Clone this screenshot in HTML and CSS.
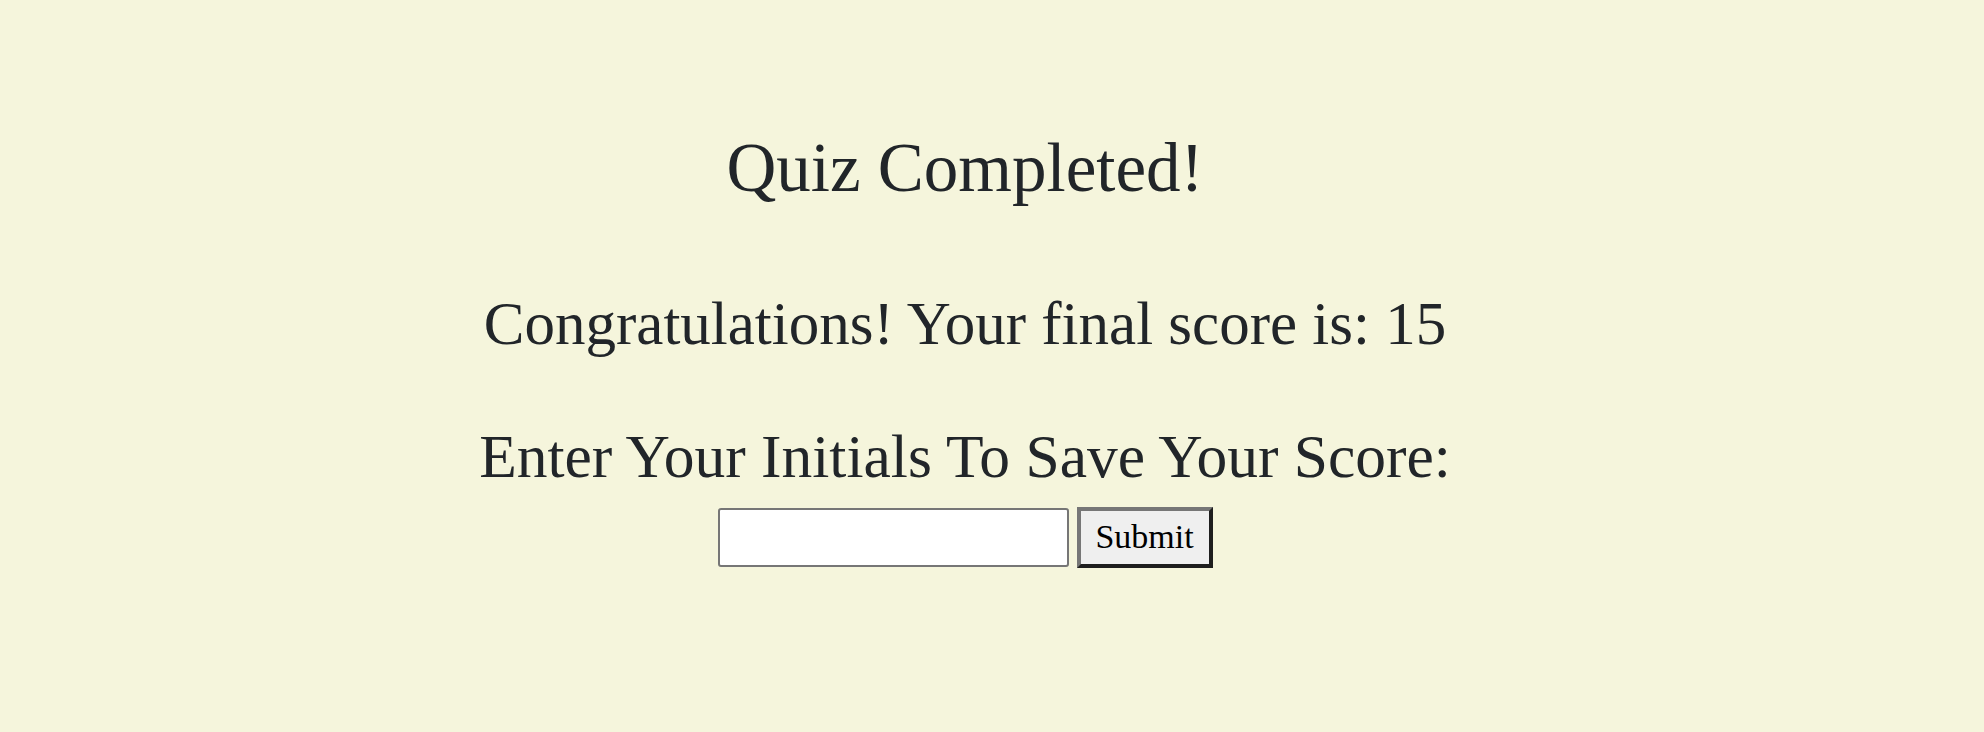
FILE: index.html
```html
<!DOCTYPE html>
<html lang="en">
<head>
<meta charset="utf-8">
<title>Quiz Completed</title>
<link rel="stylesheet" href="styles.css">
</head>
<body>
<main class="page">
  <section class="result">
    <h1 class="title">Quiz Completed!</h1>
    <h2 class="score">Congratulations! Your final score is: 15</h2>
    <h2 class="prompt">Enter Your Initials To Save Your Score:</h2>
    <form class="save-form">
      <input class="initials" type="text" aria-label="Initials">
      <button class="submit" type="button">Submit</button>
    </form>
  </section>
</main>
</body>
</html>
```

FILE: styles.css
```css
html, body {
  margin: 0;
  padding: 0;
  background: #f5f5dc;
}

body {
  font-family: "Liberation Serif", "DejaVu Serif", serif;
  color: #212529;
}

.page {
  padding-right: 54px;
  padding-top: 127px;
}

.result {
  display: flex;
  flex-direction: column;
  align-items: center;
}

.title {
  margin: 0;
  font-size: 69px;
  font-weight: 400;
  line-height: 1.2;
}

.score {
  margin: 77px 0 0;
  font-size: 61px;
  font-weight: 400;
  line-height: 1.2;
}

.prompt {
  margin: 60px 0 0;
  font-size: 61.5px;
  font-weight: 400;
  line-height: 1.2;
}

.save-form {
  margin-top: 13px;
  display: flex;
  align-items: center;
  gap: 8px;
}

.initials {
  box-sizing: border-box;
  width: 351px;
  height: 59px;
  border: 2px solid #767676;
  border-radius: 3px;
  background: #fff;
  font-family: inherit;
  font-size: 30px;
  padding: 0 6px;
}

.submit {
  box-sizing: border-box;
  width: 136px;
  height: 61px;
  padding: 0;
  background: #efefef;
  border-style: solid;
  border-width: 4px;
  border-color: #767676 #1e1e1e #1e1e1e #767676;
  font-family: "Liberation Serif", "DejaVu Serif", serif;
  font-size: 34px;
  color: #000;
}
```
